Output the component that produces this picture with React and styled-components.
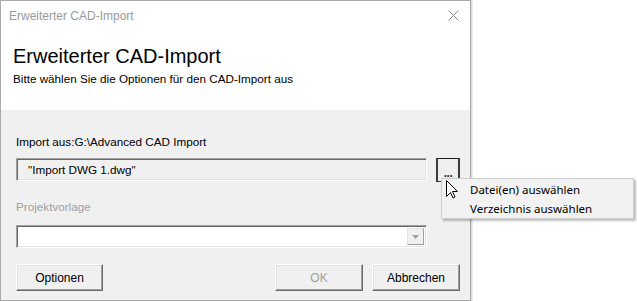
import React from "react";
import styled, { createGlobalStyle } from "styled-components";

const Global = createGlobalStyle`
  html, body { margin: 0; padding: 0; background: #ffffff; }
  body { font-family: "Liberation Sans", Arial, sans-serif; font-size: 12px; }
`;

const Stage = styled.div`
  position: relative;
  width: 637px;
  height: 301px;
  overflow: hidden;
  background: #ffffff;
`;

const Dialog = styled.div`
  display: flex;
  flex-direction: column;
  box-sizing: border-box;
  width: 471px;
  height: 301px;
  border: 1px solid #a9a9a9;
  box-shadow: 1px 0 0 #dcdcdc, 2px 0 0 #ececec;
  background: #ffffff;
`;

const TitleBar = styled.div`
  display: flex;
  align-items: center;
  justify-content: space-between;
  height: 29px;
  padding: 0 11px 0 8px;
  color: #9a9a9a;
  font-size: 12px;
`;

const Header = styled.div`
  display: flex;
  flex-direction: column;
  height: 80px;
  padding: 15px 0 0 12px;
  box-sizing: border-box;
`;

const Heading = styled.div`
  font-size: 20px;
  line-height: 23px;
  color: #000;
`;

const Subtitle = styled.div`
  margin-top: 4px;
  font-size: 11.7px;
  line-height: 14px;
  color: #000;
`;

const Body = styled.div`
  flex: 1;
  display: flex;
  flex-direction: column;
  background: #f0f0f0;
  padding: 25px 10px 0 15px;
`;

const Label = styled.div`
  font-size: 11.7px;
  line-height: 14px;
  color: ${(p) => (p.$disabled ? "#a0a0a0" : "#000")};
  margin-bottom: ${(p) => p.$mb || 0}px;
`;

const Row = styled.div`
  display: flex;
  align-items: flex-start;
  gap: 9px;
  margin-bottom: ${(p) => p.$mb || 0}px;
`;

const Sunken = styled.div`
  box-sizing: border-box;
  display: flex;
  align-items: center;
  width: 411px;
  height: 23px;
  border-top: 1px solid #a0a0a0;
  border-left: 1px solid #a0a0a0;
  border-right: 1px solid #ffffff;
  border-bottom: 1px solid #ffffff;
  box-shadow: inset 1px 1px 0 #696969, inset -1px -1px 0 #e3e3e3;
  background: ${(p) => (p.$white ? "#ffffff" : "#f0f0f0")};
  padding-left: 11px;
  font-size: 11.7px;
  color: #000;
`;

const ComboArrow = styled.div`
  margin-left: auto;
  margin-right: 2px;
  box-sizing: border-box;
  width: 17px;
  height: 17px;
  display: flex;
  align-items: center;
  justify-content: center;
  background: #f0f0f0;
  border-top: 1px solid #e3e3e3;
  border-left: 1px solid #e3e3e3;
  border-right: 1px solid #a0a0a0;
  border-bottom: 1px solid #a0a0a0;
`;

const BrowseButton = styled.div`
  box-sizing: border-box;
  width: 24px;
  height: 24px;
  background: #f0f0f0;
  border-top: 1px solid #1a1a1a;
  border-left: 2px solid #3c3c3c;
  border-right: 2px solid #3c3c3c;
  border-bottom: 1px solid #3c3c3c;
  display: flex;
  align-items: flex-end;
  justify-content: center;
  padding-bottom: 4px;
  font-size: 12px;
  line-height: 8px;
  font-weight: bold;
  color: #333;
  letter-spacing: -0.5px;
`;

const ButtonRow = styled.div`
  display: flex;
  align-items: center;
  margin-top: 16px;
`;

const Spacer = styled.div`
  flex: 1;
`;

const Button = styled.div`
  box-sizing: border-box;
  width: ${(p) => p.$w || 87}px;
  height: 27px;
  margin-left: ${(p) => p.$ml || 0}px;
  display: flex;
  align-items: center;
  justify-content: center;
  background: #f0f0f0;
  border-top: 1px solid #ffffff;
  border-left: 1px solid #ffffff;
  border-right: 1px solid #696969;
  border-bottom: 1px solid #696969;
  box-shadow: inset -1px -1px 0 #a0a0a0, inset 1px 1px 0 #e3e3e3;
  font-size: 12px;
  color: ${(p) => (p.$disabled ? "#a0a0a0" : "#000")};
`;

const Menu = styled.div`
  position: absolute;
  left: 441px;
  top: 178px;
  width: 193px;
  height: 41px;
  box-sizing: border-box;
  background: #f2f2f2;
  border: 1px solid #cccccc;
  box-shadow: 2px 2px 2px rgba(0, 0, 0, 0.25);
  display: flex;
  flex-direction: column;
  justify-content: center;
  padding-left: 28px;
`;

const MenuItem = styled.div`
  font-family: "Noto Sans", "Open Sans", sans-serif;
  font-size: 11.5px;
  line-height: 19px;
  color: #000;
`;

const Cursor = styled.svg`
  position: absolute;
  left: 446px;
  top: 180px;
`;

const CloseIcon = () => (
  <svg width="11" height="11" viewBox="0 0 11 11">
    <path d="M0.5 0.5 L10.5 10.5 M10.5 0.5 L0.5 10.5" stroke="#8a8a8a" strokeWidth="1" fill="none" />
  </svg>
);

export default function App() {
  return (
    <>
      <Global />
      <Stage>
        <Dialog>
          <TitleBar>
            <span>Erweiterter CAD-Import</span>
            <CloseIcon />
          </TitleBar>
          <Header>
            <Heading>Erweiterter CAD-Import</Heading>
            <Subtitle>Bitte wählen Sie die Optionen für den CAD-Import aus</Subtitle>
          </Header>
          <Body>
            <Label $mb={9}>{"Import aus:G:\\Advanced CAD Import"}</Label>
            <Row $mb={18}>
              <Sunken>"Import DWG 1.dwg"</Sunken>
              <BrowseButton>...</BrowseButton>
            </Row>
            <Label $disabled $mb={11}>Projektvorlage</Label>
            <Row>
              <Sunken $white>
                <ComboArrow>
                  <svg width="7" height="4" viewBox="0 0 7 4">
                    <path d="M0 0 L7 0 L3.5 4 Z" fill="#a0a0a0" />
                  </svg>
                </ComboArrow>
              </Sunken>
            </Row>
            <ButtonRow>
              <Button $w={87}>Optionen</Button>
              <Spacer />
              <Button $w={88} $disabled>OK</Button>
              <Button $w={88} $ml={9}>Abbrechen</Button>
            </ButtonRow>
          </Body>
        </Dialog>
        <Menu>
          <MenuItem>Datei(en) auswählen</MenuItem>
          <MenuItem>Verzeichnis auswählen</MenuItem>
        </Menu>
        <Cursor width="12" height="19" viewBox="0 0 12 19">
          <path
            d="M0.5 0.5 L0.5 16.5 L4.5 12.5 L7 18 L9 17 L6.5 11.5 L11.5 11.5 Z"
            fill="#ffffff"
            stroke="#000000"
            strokeWidth="1"
            strokeLinejoin="miter"
          />
        </Cursor>
      </Stage>
    </>
  );
}
